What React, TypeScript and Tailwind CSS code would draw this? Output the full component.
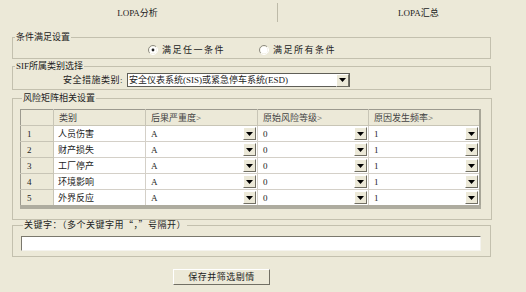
import React from 'react';

const rows = [
  { id: 1, name: '人员伤害' },
  { id: 2, name: '财产损失' },
  { id: 3, name: '工厂停产' },
  { id: 4, name: '环境影响' },
  { id: 5, name: '外界反应' },
];

function DropBtn() {
  return (
    <span className="flex h-[13px] w-[13px] shrink-0 items-center justify-center border border-t-white border-l-white border-r-[#716f64] border-b-[#716f64] bg-[#ece9d8]">
      <svg width="7" height="4" viewBox="0 0 7 4">
        <path d="M0 0h7L3.5 4z" fill="#000" />
      </svg>
    </span>
  );
}

function Radio({ checked }: { checked?: boolean }) {
  return (
    <svg width="10" height="10" viewBox="0 0 10 10" className="shrink-0">
      <path d="M8.2 1.8A4.5 4.5 0 0 0 1.8 8.2" fill="none" stroke="#8d8b80" />
      <path d="M1.8 8.2A4.5 4.5 0 0 0 8.2 1.8" fill="none" stroke="#fff" />
      <circle cx="5" cy="5" r="3.6" fill="#fff" />
      {checked && <circle cx="5" cy="5" r="1.4" fill="#222" />}
    </svg>
  );
}

function Cell({ value, last }: { value: string; last?: boolean }) {
  return (
    <td className={`h-[16px] border-b border-[#d4d0c8] bg-white p-0 ${last ? '' : 'border-r'}`}>
      <div className="flex h-[15px] items-center justify-between pl-[5px] pr-[1px]">
        <span>{value}</span>
        <DropBtn />
      </div>
    </td>
  );
}

export default function App() {
  return (
    <div className="h-[292px] w-[526px] overflow-hidden bg-[#ece9d8] font-['Liberation_Serif','Noto_Sans_CJK_SC',serif] text-[9px] leading-[12px] text-[#222]">
      {/* tabs */}
      <div className="flex h-[31px] items-start pt-[3px]">
        <div className="flex h-[19px] w-[278px] items-center justify-center border-r border-[#bdbaa8] pr-[2px]">
          LOPA分析
        </div>
        <div className="flex h-[19px] flex-1 items-center pl-[120px]">LOPA汇总</div>
      </div>

      <div className="ml-[12px] w-[479px]">
        {/* group 1 */}
        <fieldset className="border border-[#c3c0ae]">
          <legend className="ml-[2px] px-[1px]">条件满足设置</legend>
          <div className="flex h-[15px] items-center pb-[2px] pl-[135px]">
            <label className="flex items-center gap-[4px] tracking-[1.5px]">
              <Radio checked />
              满足任一条件
            </label>
            <label className="ml-[34px] flex items-center gap-[4px] tracking-[1.5px]">
              <Radio />
              满足所有条件
            </label>
          </div>
        </fieldset>

        {/* group 2 */}
        <fieldset className="mt-[1px] border border-[#c3c0ae]">
          <legend className="ml-[2px] px-[1px]">SIF所属类别选择</legend>
          <div className="flex h-[17px] items-start pt-[1px] pl-[50px]">
            <span className="mt-[1px] w-[64px] tracking-[0.5px]">安全措施类别:</span>
            <div className="flex h-[14px] w-[223px] items-center justify-between border border-[#5f5e57] bg-white pl-[1px]">
              <span className="leading-[12px]">安全仪表系统(SIS)或紧急停车系统(ESD)</span>
              <DropBtn />
            </div>
          </div>
        </fieldset>

        {/* group 3 */}
        <fieldset className="mt-[2px] border border-[#c3c0ae] pl-[7px] pr-[10px] pt-[5px] pb-[10px]">
          <legend className="ml-[2px] px-[1px]">风险矩阵相关设置</legend>
          <table className="w-[459px] table-fixed border-collapse border-l border-t border-r-2 border-b-[4px] border-l-[#9c9a8f] border-t-[#9c9a8f] border-r-[#a8a698] border-b-[#aeac9f]">
            <colgroup>
              <col className="w-[33px]" />
              <col className="w-[92px]" />
              <col className="w-[112px]" />
              <col className="w-[111px]" />
              <col className="w-[111px]" />
            </colgroup>
            <thead>
              <tr className="h-[16px] bg-[#ece9d8] text-[#444]">
                <th className="border-r border-b border-[#c8c5b6] p-0" />
                <th className="border-r border-b border-[#c8c5b6] p-0 pl-[5px] text-left font-normal">类别</th>
                <th className="border-r border-b border-[#c8c5b6] p-0 pl-[5px] text-left font-normal">后果严重度&gt;</th>
                <th className="border-r border-b border-[#c8c5b6] p-0 pl-[5px] text-left font-normal">原始风险等级&gt;</th>
                <th className="border-b border-[#c8c5b6] p-0 pl-[5px] text-left font-normal">原因发生频率&gt;</th>
              </tr>
            </thead>
            <tbody>
              {rows.map((r) => (
                <tr key={r.id} className="h-[16px]">
                  <td className="border-r border-b border-[#c8c5b6] bg-[#ece9d8] p-0 pl-[6px]">{r.id}</td>
                  <td className="border-r border-b border-[#d4d0c8] bg-white p-0 pl-[4px]">{r.name}</td>
                  <Cell value="A" />
                  <Cell value="0" />
                  <Cell value="1" last />
                </tr>
              ))}
            </tbody>
          </table>
        </fieldset>

        {/* group 4 */}
        <fieldset className="-mt-[1px] border border-[#c3c0ae] pl-[8px] pr-[9px] pt-[5px] pb-[5px]">
          <legend className="ml-[2px] px-[1px] tracking-[0.5px]">
            关键字：（多个关键字用
            <span className="font-['Noto_Sans_CJK_SC',sans-serif]">“，”</span>
            号隔开）
          </legend>
          <div className="h-[15px] border border-t-[#7a786d] border-l-[#7a786d] border-r-[#f4f3ee] border-b-[#f4f3ee] bg-white" />
        </fieldset>

        <button className="ml-[161px] mt-[12px] flex h-[16px] w-[97px] items-center justify-center border border-t-white border-l-white border-r-[#716f64] border-b-[#716f64] bg-[#ece9d8] tracking-[0.5px]">
          保存并筛选剔情
        </button>
      </div>
    </div>
  );
}
